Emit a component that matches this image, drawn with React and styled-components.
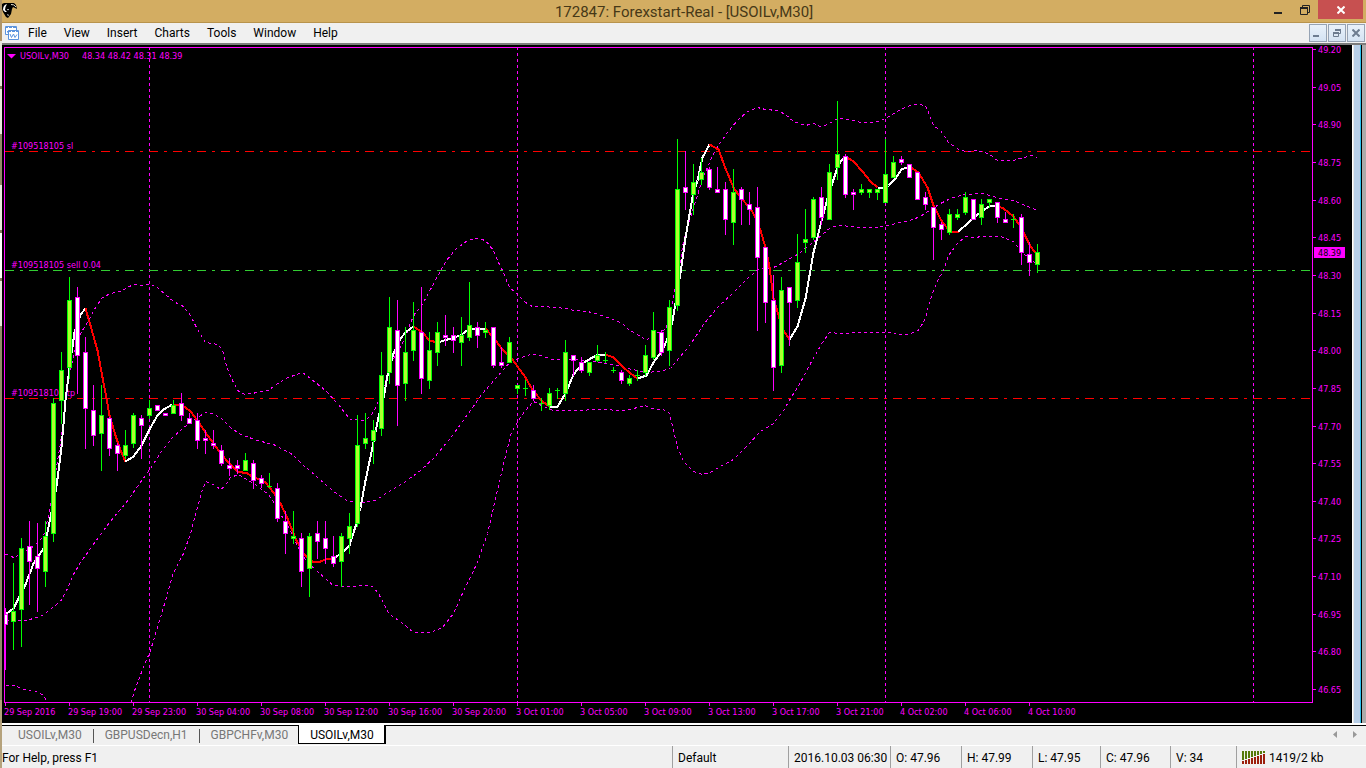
import React, { useState } from 'react';
import { styled, css, createGlobalStyle } from 'styled-components';

const GlobalStyle = createGlobalStyle`
    * {
        box-sizing: border-box;
    }
    body {
        margin: 0;
        overflow: hidden;
        font-family: Roboto, "Open Sans", sans-serif;
        font-size: 12px;
        color: #000;
    }
    button {
        font: inherit;
        color: inherit;
        padding: 0;
        border: none;
        background: none;
    }
`;

const Screen = styled.div`
    display: flex;
    height: 100vh;
    background-color: #f0f0f0;
`;

const Backdrop = styled.div`
    flex: none;
    width: 2px;
    background: linear-gradient(
        #b09568 0 41px, #e8e6de 41px 86px, #85795a 86px 89px,
        #e8e6de 89px 134px, #94876a 134px 185px, #e8e6de 185px 230px,
        #85795a 230px 233px, #fff 233px 278px, #85795a 278px 281px,
        #e8e6de 281px 326px, #94876a 326px 700px, #b5a27c 700px
    );
`;

const Window = styled.div`
    flex: 1;
    min-width: 0;
    display: flex;
    flex-direction: column;
`;

const TitleBar = styled.header`
    display: grid;
    grid-template-columns: 1fr auto 1fr;
    height: 23px;
    background-color: #d3ad62;
    border-bottom: 1px solid #b8934c;
`;

const Title = styled.h1`
    margin: 0;
    font-size: 15px;
    line-height: 24px;
    font-weight: 400;
    color: #463817;
`;

const WindowButtons = styled.div`
    display: flex;
    justify-content: flex-end;
    padding-right: 3px;
`;

const WindowButton = styled.button`
    display: flex;
    width: 26px;
    height: 19px;
    svg {
        margin: auto;
    }
    ${({ $close }) =>
        $close &&
        css`
            width: 45px;
            background-color: #c75050;
        `}
`;

const MenuBar = styled.nav`
    display: flex;
    align-items: center;
    height: 20px;
    padding-left: 3px;
    background-color: #f0f0f0;
`;

const Menu = styled.ul`
    display: flex;
    flex: 1;
    gap: 17px;
    margin: 0;
    padding: 0 0 0 7px;
    list-style: none;
`;

const MenuItem = styled.button`
    display: block;
    line-height: 20px;
`;

const ChildButtons = styled.div`
    display: flex;
    gap: 1px;
    padding-right: 1px;
`;

const ChildButton = styled.button`
    display: flex;
    width: 18px;
    height: 18px;
    border: 1px solid #96a3b4;
    background: linear-gradient(#e9f1fa, #d4e3f3);
    svg {
        margin: auto;
    }
`;

const Workspace = styled.main`
    flex: 1;
    min-height: 0;
    display: flex;
    border-top: 2px solid #7c7c7c;
    border-bottom: 2px solid #fff;
`;

const ChartPane = styled.div`
    flex: 1;
    min-width: 0;
    background-color: #000;
`;

const ChartSvg = styled.svg`
    display: block;
    width: 100%;
    height: 100%;
    font-family: "DejaVu Sans Condensed", "DejaVu Sans", sans-serif;
    font-size: 9px;
    text {
        fill: #f0f;
        white-space: pre;
    }
`;

const WindowEdge = styled.div`
    flex: none;
    width: 14px;
    background: linear-gradient(
        90deg, #fff 0 1px, #e8e8e8 1px 2px, #b8cfe8 2px 8px,
        #2cc3f0 8px 9px, #000 9px 10px, #ababab 10px
    );
`;

const TabBar = styled.div`
    display: flex;
    align-items: flex-start;
    height: 20px;
    padding-left: 4px;
    border-top: 1px solid #000;
    background-color: #f0f0f0;
`;

const Tab = styled.button`
    height: 18px;
    padding: 0 11px 0 12px;
    line-height: 17px;
    color: #777;
    ${({ $active }) =>
        $active &&
        css`
            height: 19px;
            border: 1px solid #000;
            border-top: none;
            border-right-width: 2px;
            background-color: #fff;
            color: #000;
            padding: 0 10px 0 11px;
            margin: -1px 0 0 -1px;
            line-height: 20px;
        `}
`;

const TabDivider = styled.span`
    width: 1px;
    height: 14px;
    margin: 3px -1px 0 0;
    background-color: #555;
`;

const TabArrows = styled.div`
    display: flex;
    gap: 14px;
    margin-left: auto;
    padding: 5px 9px 0 0;
`;

const ArrowButton = styled.button`
    display: block;
    height: 7px;
    svg {
        display: block;
    }
`;

const StatusBar = styled.footer`
    display: flex;
    height: 23px;
    border-top: 1px solid #fff;
    background-color: #f0f0f0;
    line-height: 24px;
    white-space: nowrap;
`;

const StatusText = styled.span`
    flex: 1;
`;

const StatusCell = styled.span`
    display: flex;
    gap: 4px;
    width: ${({ $width }) => $width}px;
    padding-left: 5px;
    border-left: 1px solid #a0a0a0;
    svg {
        margin-top: 5px;
    }
`;

const MENU = ['File', 'View', 'Insert', 'Charts', 'Tools', 'Window', 'Help'];
const TABS = ['USOILv,M30', 'GBPUSDecn,H1', 'GBPCHFv,M30', 'USOILv,M30'];
const STATUS = [
    ['Default', 116],
    ['2016.10.03 06:30', 102],
    ['O: 47.96', 71],
    ['H: 47.99', 71],
    ['L: 47.95', 68],
    ['C: 47.96', 70],
    ['V: 34', 66],
];

const DATES = [
    '29 Sep 2016', '29 Sep 19:00', '29 Sep 23:00', '30 Sep 04:00', '30 Sep 08:00',
    '30 Sep 12:00', '30 Sep 16:00', '30 Sep 20:00', '3 Oct 01:00', '3 Oct 05:00',
    '3 Oct 09:00', '3 Oct 13:00', '3 Oct 17:00', '3 Oct 21:00', '4 Oct 02:00',
    '4 Oct 06:00', '4 Oct 10:00',
];

// up, high, body top, body bottom, low
const CANDLES = [
    [0, 608, 614, 625, 670], [1, 563, 611, 622, 650], [1, 538, 548, 610, 647], [0, 521, 546, 562, 605],
    [0, 523, 556, 569, 612], [1, 521, 536, 572, 587], [1, 398, 403, 534, 542], [1, 352, 370, 401, 424],
    [1, 277, 300, 368, 379], [0, 287, 297, 356, 394], [0, 337, 352, 409, 449], [0, 385, 410, 436, 446],
    [1, 385, 415, 434, 471], [0, 417, 418, 449, 456], [0, 443, 445, 454, 471], [1, 430, 445, 456, 459],
    [1, 413, 415, 444, 448], [0, 415, 418, 426, 459], [1, 400, 408, 416, 419], [0, 405, 405, 411, 411],
    [0, 413, 413, 416, 416], [1, 400, 405, 414, 414], [0, 393, 403, 416, 421], [0, 413, 418, 424, 424],
    [0, 413, 420, 441, 449], [0, 430, 438, 441, 454], [0, 430, 443, 446, 449], [0, 445, 450, 464, 466],
    [0, 458, 465, 469, 476], [0, 460, 465, 469, 474], [1, 453, 460, 471, 471], [0, 460, 463, 481, 489],
    [0, 475, 478, 484, 488], [1, 473, 486, 487, 488], [0, 483, 488, 519, 522], [0, 511, 521, 534, 554],
    [1, 511, 536, 539, 544], [0, 533, 538, 572, 587], [1, 533, 536, 569, 597], [0, 521, 533, 542, 559],
    [0, 521, 538, 549, 564], [0, 536, 556, 564, 567], [1, 533, 536, 562, 587], [1, 513, 526, 539, 554],
    [1, 415, 445, 524, 527], [1, 413, 438, 444, 449], [1, 420, 430, 441, 464], [1, 352, 375, 429, 436],
    [1, 297, 327, 373, 384], [0, 300, 330, 386, 426], [1, 327, 352, 384, 401], [1, 302, 330, 351, 361],
    [0, 287, 332, 379, 394], [1, 332, 350, 381, 389], [1, 322, 332, 353, 366], [0, 315, 335, 338, 346],
    [0, 327, 335, 341, 353], [1, 317, 335, 343, 366], [1, 282, 325, 338, 341], [0, 322, 327, 336, 348],
    [1, 322, 330, 333, 338], [0, 327, 327, 366, 368], [0, 347, 362, 366, 368], [1, 337, 342, 363, 363],
    [1, 385, 385, 389, 394], [1, 380, 388, 389, 396], [0, 385, 390, 399, 401], [1, 398, 403, 404, 411],
    [1, 388, 393, 406, 410], [1, 388, 390, 391, 399], [1, 340, 352, 394, 401], [0, 355, 355, 361, 376],
    [0, 357, 362, 371, 373], [1, 362, 362, 373, 376], [1, 345, 355, 361, 362], [1, 352, 360, 361, 363],
    [1, 367, 370, 371, 373], [0, 370, 372, 381, 384], [1, 375, 378, 384, 386], [1, 370, 375, 376, 381],
    [1, 345, 355, 373, 376], [1, 312, 330, 358, 360], [0, 330, 332, 353, 356], [1, 300, 307, 351, 366],
    [1, 139, 189, 306, 311], [0, 151, 187, 193, 210], [1, 164, 182, 195, 215], [1, 158, 172, 180, 185],
    [0, 167, 169, 188, 190], [0, 167, 189, 193, 193], [0, 182, 189, 220, 235], [1, 169, 192, 223, 245],
    [0, 187, 189, 200, 225], [0, 192, 204, 210, 225], [0, 187, 207, 258, 331], [0, 247, 247, 303, 323],
    [0, 275, 300, 368, 391], [1, 277, 290, 366, 373], [0, 287, 287, 303, 346], [1, 234, 262, 301, 308],
    [1, 209, 239, 243, 253], [1, 197, 199, 238, 240], [0, 187, 197, 218, 225], [1, 164, 172, 220, 220],
    [1, 101, 154, 168, 180], [0, 154, 156, 195, 198], [0, 189, 192, 195, 210], [1, 184, 189, 193, 195],
    [1, 189, 189, 193, 198], [1, 189, 189, 193, 200], [1, 139, 174, 203, 203], [1, 156, 162, 178, 178],
    [0, 156, 159, 163, 165], [0, 164, 164, 178, 178], [0, 172, 172, 200, 200], [0, 192, 197, 205, 210],
    [0, 207, 207, 228, 260], [0, 222, 224, 230, 240], [1, 209, 214, 233, 235], [1, 209, 214, 218, 220],
    [1, 192, 197, 213, 215], [0, 199, 199, 220, 220], [1, 199, 204, 218, 225], [1, 199, 199, 203, 208],
    [0, 202, 202, 218, 223], [0, 212, 219, 223, 223], [1, 214, 219, 220, 228], [0, 214, 217, 253, 265],
    [0, 242, 254, 263, 276], [1, 244, 252, 265, 273],
];

const AVERAGE = [
    ['#fff', '5,614 13,608 19,596 25,584 33,563 43,548 48,527 51,512 56,486 61,447 65,400 69,367 74,332 80,314 85,308'],
    ['#f00', '85,308 90,325 97,350 102,377 106,398 109,415 115,435 120,450 125,461'],
    ['#fff', '125,461 133,456 141,445 149,429 157,415 163,409 172,404'],
    ['#f00', '172,404 181,404 190,411 197,420 205,432 213,443 221,454 229,463 237,471 247,473 253,477 260,479 265,482 273,492 280,503 287,518 295,538 303,553 312,561 320,561 327,558 333,558'],
    ['#fff', '333,558 342,552 349,545 355,526 360,507 365,480 373,442 378,417 384,393 387,375 393,353 400,338 405,332 413,326'],
    ['#f00', '413,326 422,332 429,340 437,342'],
    ['#fff', '437,342 447,339 460,335 468,329 477,328 485,328'],
    ['#f00', '485,328 493,337 502,349 512,359 525,377 533,391 542,401 549,406'],
    ['#fff', '549,406 557,406 565,393 573,374 582,363 590,358 598,354 605,354'],
    ['#f00', '605,354 613,357 622,366 630,373 637,378'],
    ['#fff', '637,378 646,375 653,362 662,350 667,338 672,321 676,297 680,273 685,237 692,197 697,180 702,157 709,144'],
    ['#f00', '709,144 718,149 725,168 733,187 740,197 750,208 755,217 760,230 765,247 769,267 773,298 779,318 783,330 789,339'],
    ['#fff', '789,339 797,326 805,298 813,252 822,217 827,198 832,182 837,167 840,161 845,156'],
    ['#f00', '845,156 853,161 862,171 870,181 877,187'],
    ['#fff', '877,187 883,187 888,185 895,178 901,169 909,166'],
    ['#f00', '909,166 918,172 927,187 933,205 942,222 950,231 958,231'],
    ['#fff', '958,231 967,223 977,214 990,205 995,205'],
    ['#f00', '995,205 1003,208 1013,216 1020,226 1030,246 1037,255'],
];

const BANDS = [
    // upper
    '5,554 10,555 14,558 18,554 33,546 43,536 48,515 60,443 69,372 75,348 80,333 88,320 95,307 102,297 110,293 120,291 127,287 133,284 142,285 150,284 157,287 165,294 173,301 183,306 190,315 197,329 205,342 217,344 222,349 226,366 232,380 238,391 245,394 257,392 268,390 273,386 285,378 302,372 310,378 325,390 338,404 344,412 350,419 362,420 369,417 375,408 382,390 388,372 392,360 402,343 407,332 410,322 415,312 420,307 430,289 437,276 442,267 446,260 455,249 467,240 477,238 485,240 493,250 497,260 502,270 509,287 518,295 525,302 532,306 543,306 553,307 567,308 573,310 587,311 595,313 610,318 622,323 628,329 637,334 646,340 653,334 665,329 668,320 673,297 680,260 683,240 690,217 697,195 702,178 707,167 712,155 720,142 727,132 737,120 747,111 757,107 765,109 777,110 785,114 793,121 805,125 813,123 820,126 827,124 837,118 850,119 860,122 873,122 883,119 887,117 900,109 910,105 917,104 925,105 928,112 933,125 940,130 948,142 960,150 967,151 975,150 988,153 997,160 1013,160 1023,157 1032,155 1037,157',
    // middle
    '5,620 15,620 25,620 33,618 42,615 47,611 60,601 67,588 73,574 80,562 90,548 100,534 113,517 125,503 137,486 150,468 163,448 173,436 187,424 197,417 205,412 213,413 222,419 230,427 240,434 257,440 273,444 292,454 303,465 315,475 333,491 348,501 363,502 375,500 390,490 405,481 420,470 433,458 452,435 467,414 482,393 497,376 510,361 518,358 530,354 540,355 552,359 567,359 587,360 600,362 613,364 627,368 637,370 648,372 663,370 670,368 678,358 690,344 703,324 717,307 733,292 747,278 758,269 773,267 783,262 797,254 810,244 822,234 830,227 840,225 860,227 877,227 887,225 900,222 913,219 923,214 930,209 942,202 950,198 963,194 982,193 1000,198 1013,200 1027,206 1037,210',
    // lower, which leaves the plot between two stretches
    '5,685 15,685 20,688 37,691 43,695 47,702',
    '131,702 133,693 142,669 150,650 157,627 165,600 173,572 183,553 190,533 197,507 201,492 205,481 213,484 220,489 224,486 230,477 238,474 246,479 256,485 268,494 275,504 282,517 290,530 300,552 307,562 315,569 328,581 333,585 350,586 363,585 372,586 378,593 389,614 400,621 413,632 430,632 442,627 453,613 462,593 477,562 487,533 493,507 500,477 507,447 511,432 518,420 525,410 533,401 543,406 553,410 573,410 600,409 623,410 633,408 645,405 650,408 663,409 669,413 673,430 677,447 683,461 693,471 702,474 712,471 718,467 733,459 747,445 760,431 773,423 783,410 792,395 800,382 810,363 822,342 829,332 840,333 862,332 888,332 898,334 908,334 918,330 925,318 928,305 932,293 937,280 943,270 948,255 957,243 965,236 973,237 983,236 1000,236 1013,241 1023,253 1035,263',
];

const LEVELS = [
    { y: 151, color: '#f00', label: '#109518105 sl' },
    { y: 270, color: '#32cd32', label: '#109518105 sell 0.04' },
    { y: 398, color: '#f00', label: '#109518105 tp' },
];

const Candle = ({ index, data }) => {
    const [up, high, top, bottom, low] = data;
    const x = 5 + index * 8;
    const color = up ? '#0f0' : '#f0f';
    return (
        <g stroke={color} fill={up ? '#adff2f' : '#fff'}>
            <path d={`M${x} ${high - 0.5}V${low - 0.5}`} />
            {bottom - top > 1 ? (
                <rect x={x - 2} y={top} width="4" height={bottom - top - 1} />
            ) : (
                <path d={`M${x - 2.5} ${top}h5`} />
            )}
        </g>
    );
};

const Chart = () => (
    <ChartSvg viewBox="2 45 1350 678" role="img" aria-label="USOILv M30 price chart">
        <defs>
            <clipPath id="plot">
                <rect x="5" y="48" width="1307" height="654" />
            </clipPath>
        </defs>
        {LEVELS.map(({ y, label }) => (
            <text key={y} x="11" y={y - 2}>{label}</text>
        ))}
        <g clipPath="url(#plot)" shapeRendering="crispEdges">
            <g transform="translate(.5 .5)" fill="none">
                {[149, 517, 885, 1253].map((x) => (
                    <path key={x} d={`M${x} 46.5V702`} stroke="#f0f" strokeDasharray="3 3" />
                ))}
                {LEVELS.map(({ y, color }) => (
                    <path key={y} d={`M4.5 ${y}H1311`} stroke={color} strokeDasharray="9 6 3 6" />
                ))}
                {BANDS.map((points) => (
                    <polyline key={points} points={points} stroke="#f0f" strokeDasharray="3 3" />
                ))}
                {AVERAGE.map(([color, points]) => (
                    <polyline key={points} points={points} stroke={color} strokeWidth="2" />
                ))}
                {CANDLES.map((data, i) => (
                    <Candle key={i} index={i} data={data} />
                ))}
            </g>
        </g>
        <g shapeRendering="crispEdges">
            <path d="M4.500 47.500H1312.500V702.500H4.500z" fill="none" stroke="#f0f" />
            {DATES.map((date, i) => (
                <rect key={date} x={5 + i * 64} y="703" width="1" height="3" fill="#f0f" />
            ))}
        </g>
        {DATES.map((date, i) => (
            <text key={date} x={4 + i * 64} y="715">{date}</text>
        ))}
        {Array.from({ length: 18 }, (_, i) => {
            const y = Math.round(49 + i * 37.65);
            return (
                <g key={i}>
                    <rect x="1313" y={y} width="3" height="1" fill="#f0f" />
                    <text x="1318" y={y + 4}>{(49.2 - i * 0.15).toFixed(2)}</text>
                </g>
            );
        })}
        <rect x="1314" y="247" width="31" height="11" fill="#f0f" />
        <text x="1318" y="256" style={{ fill: '#000' }}>48.39</text>
        <path d="M7 54h9l-4.500 4.500z" fill="#f0f" />
        <text x="20" y="59">USOILv,M30</text>
        <text x="82" y="59">48.34 48.42 48.31 48.39</text>
    </ChartSvg>
);

const BullIcon = () => (
    <svg width="16" height="19" viewBox="0 0 16 19" aria-hidden="true">
        <path d="M0 4L2 3H12L14 5L15 9L13 8L11 7L10 9L9 14L6 18L4 17L1 12L0 9z" fill="#000" />
        <path d="M1 10Q1 5 5 4Q3 7 3 10L5 12L3 12z" fill="#fff" />
        <path d="M5 9h2l-1 1.500zM5 14l2 1-1 1z" fill="#fff" />
        <path d="M9 4.500Q12 4 14 7" fill="none" stroke="#e8e0d0" />
    </svg>
);

const ChartIcon = () => (
    <svg width="16" height="16" viewBox="0 0 16 16" fill="#fff" stroke="#5b93dd" aria-hidden="true">
        <path d="M.5 1.500h11v8H.5z" />
        <path d="M0 2.500h12" strokeDasharray="3 1" />
        <path d="M2.500 7.500V6M4 5v2" />
        <path d="M3.500 5.500h10v9h-10z" />
        <path d="M3 6.500h11" strokeDasharray="3 1" />
        <path d="M5 9l1.500 3.500 2-3.500 1.500 3.500 2-3" fill="none" />
    </svg>
);

const MinimizeIcon = ({ color = '#222', size = 8 }) => (
    <svg width="10" height="10" viewBox="0 0 10 10" aria-hidden="true">
        <rect x="0" y="7" width={size} height="2" fill={color} />
    </svg>
);

const RestoreIcon = ({ color = '#222' }) => (
    <svg width="10" height="10" viewBox="0 0 10 10" fill="none" stroke={color} aria-hidden="true">
        <path d="M2.500 2V.5h7v7H8" />
        <path d="M.5 3.500h7v6h-7z" />
        <path d="M0 3h8" strokeWidth="2" />
    </svg>
);

const ChildRestoreIcon = () => (
    <svg width="8" height="8" viewBox="0 0 8 8" fill="none" stroke="#6d7c90" aria-hidden="true">
        <path d="M2.500 2V.5h5v4H6" />
        <path d="M.5 3.500h5v4h-5z" />
        <path d="M0 4h6M2 1h6" strokeWidth="2" />
    </svg>
);

const CloseIcon = ({ color = '#fff' }) => (
    <svg width="8" height="8" viewBox="0 0 8 8" stroke={color} strokeWidth="2" aria-hidden="true">
        <path d="M.5.5l7 7M7.500.5l-7 7" />
    </svg>
);

const SignalIcon = () => (
    <svg width="23" height="13" viewBox="0 0 23 13" shapeRendering="crispEdges" aria-hidden="true">
        {Array.from({ length: 8 }, (_, i) => (
            <g key={i}>
                <rect x={i * 3} y="0" width="2" height={9 - i} fill="#557a0a" />
                <rect x={i * 3} y={10 - i} width="2" height={3 + i} fill="#9c1f0c" />
            </g>
        ))}
    </svg>
);

const Arrow = ({ d }) => (
    <svg width="5" height="7" viewBox="0 0 5 7" aria-hidden="true">
        <path d={d} fill="#999" />
    </svg>
);

export default function App() {
    const [active, setActive] = useState(3);

    return (
        <Screen>
            <GlobalStyle />
            <Backdrop />
            <Window>
                <TitleBar>
                    <BullIcon />
                    <Title>172847: Forexstart-Real - [USOILv,M30]</Title>
                    <WindowButtons>
                        <WindowButton aria-label="Minimize"><MinimizeIcon /></WindowButton>
                        <WindowButton aria-label="Restore"><RestoreIcon /></WindowButton>
                        <WindowButton $close aria-label="Close"><CloseIcon /></WindowButton>
                    </WindowButtons>
                </TitleBar>
                <MenuBar>
                    <ChartIcon />
                    <Menu>
                        {MENU.map((item) => (
                            <li key={item}><MenuItem>{item}</MenuItem></li>
                        ))}
                    </Menu>
                    <ChildButtons>
                        <ChildButton aria-label="Minimize chart"><MinimizeIcon color="#6d7c90" size={6} /></ChildButton>
                        <ChildButton aria-label="Restore chart"><ChildRestoreIcon /></ChildButton>
                        <ChildButton aria-label="Close chart"><CloseIcon color="#6d7c90" /></ChildButton>
                    </ChildButtons>
                </MenuBar>
                <Workspace>
                    <ChartPane><Chart /></ChartPane>
                    <WindowEdge />
                </Workspace>
                <TabBar>
                    {TABS.map((tab, i) => (
                        <React.Fragment key={i}>
                            {i > 0 && i < 3 && <TabDivider />}
                            <Tab $active={i === active} onClick={() => setActive(i)}>{tab}</Tab>
                        </React.Fragment>
                    ))}
                    <TabArrows>
                        <ArrowButton aria-label="Previous tabs"><Arrow d="M4 0v7L0 3.500z" /></ArrowButton>
                        <ArrowButton aria-label="Next tabs"><Arrow d="M1 0v7l4-3.500z" /></ArrowButton>
                    </TabArrows>
                </TabBar>
                <StatusBar>
                    <StatusText>For Help, press F1</StatusText>
                    {STATUS.map(([text, width]) => (
                        <StatusCell key={text} $width={width}>{text}</StatusCell>
                    ))}
                    <StatusCell $width={130}><SignalIcon />1419/2 kb</StatusCell>
                </StatusBar>
            </Window>
        </Screen>
    );
}
